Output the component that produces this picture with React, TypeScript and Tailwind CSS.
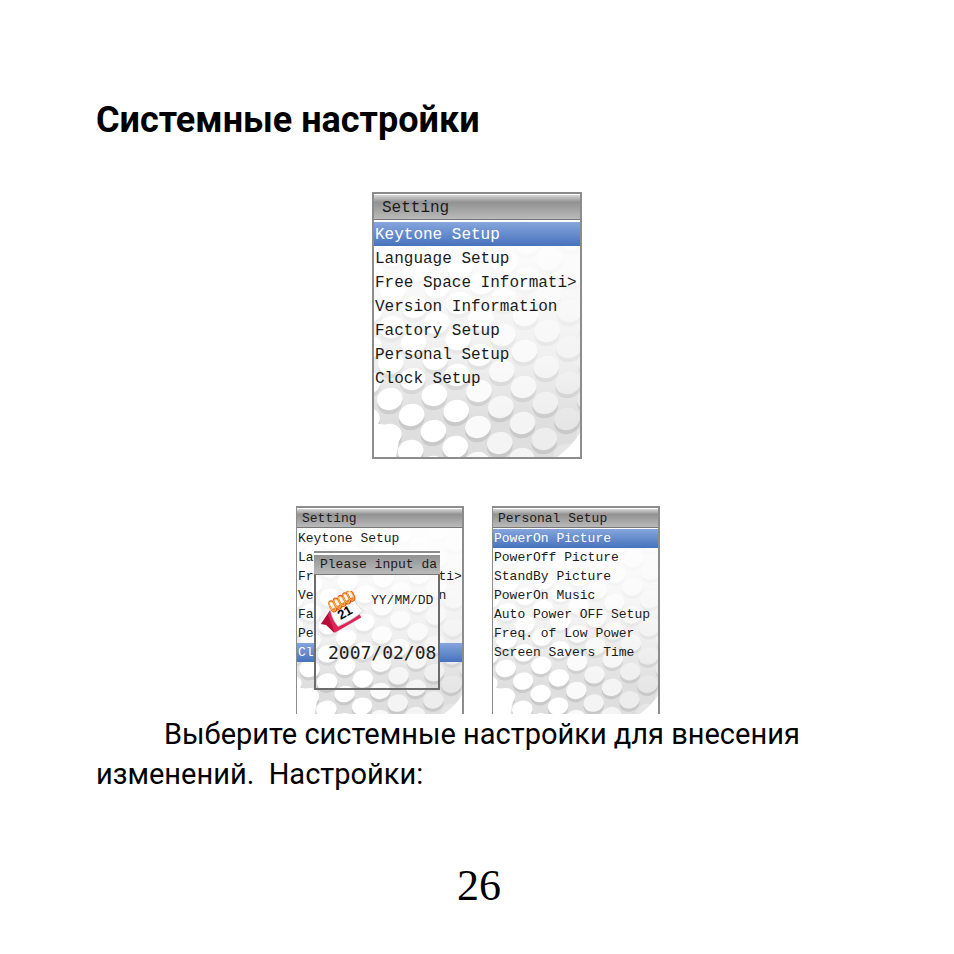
import { useId } from 'react';

const DOTS = Array.from({ length: 26 }, (_, i) => i - 10).flatMap((i) =>
  Array.from({ length: 22 }, (_, j) => j - 8).map((j) => ({
    x: 16 + 22 * i + 23 * j,
    y: 179 + 16 * i - 20 * j,
  })),
).filter(({ x, y }) => x > -14 && x < 222 && y > -14 && y < 250)
  .sort((a, b) => a.y - b.y);

const dotColor = (x: number) => {
  if (x < 95) return '#ffffff';
  if (x < 125) return '#fafafa';
  if (x < 155) return '#f4f4f4';
  return x < 185 ? '#ededed' : '#e6e6e6';
};

const DottedBackground = ({ className = 'inset-0 size-full' }: { className?: string }) => {
  const id = useId();
  return (
    <svg className={`absolute max-w-none ${className}`} viewBox="0 0 208 237" preserveAspectRatio="none" aria-hidden="true">
      <defs>
        <linearGradient id={`${id}-fade`} x1="0" y1="0" x2="0" y2="1">
          <stop offset="0" stopColor="#fff" stopOpacity="0.96" />
          <stop offset="0.3" stopColor="#fff" stopOpacity="0.8" />
          <stop offset="0.6" stopColor="#fff" stopOpacity="0.5" />
          <stop offset="0.85" stopColor="#fff" stopOpacity="0" />
        </linearGradient>
      </defs>
      <rect width="208" height="237" fill="#dedede" />
      {DOTS.map(({ x, y }) => (
        <g key={`${x}-${y}`} transform={`translate(${x} ${y}) rotate(-14)`}>
          <ellipse cx="-1" cy="4" rx="13" ry="11" fill="#c9c9c9" />
          <ellipse rx="13" ry="11" fill={dotColor(x)} />
        </g>
      ))}
      <rect width="208" height="237" fill={`url(#${id}-fade)`} />
      <path d="M0 202 L5 204 Q22 204 25 222 L22 237 H0 Z" fill="#fff" />
      <path d="M185 237 Q200 226 208 213 V237 Z" fill="#fff" />
    </svg>
  );
};

const CalendarIcon = () => (
  <svg className="w-[45px] h-[43px] shrink-0" viewBox="0 0 135 130" aria-hidden="true">
    <path d="M30 58 L2 100 L18 103 L42 126 L52 108 Z" fill="#b80d38" />
    <path d="M30 58 L24 72 L44 126 L124 80 L120 70 L52 104 Z" fill="#e02457" />
    <path d="M31 58 L101 17 Q107 43 131 60 Q96 90 54 107 Q36 86 31 58 Z" fill="#fdfdfd" stroke="#c9c9c9" strokeWidth="2" />
    <path d="M31 58 L101 17 L104 28 L40 66 Z" fill="#f3842c" />
    {[38, 52, 66, 80, 93].map((x, i) => (
      <g key={x} fill="none" transform={`translate(${x} ${46 - i * 8}) rotate(-28)`}>
        <ellipse rx="8" ry="17" stroke="#e0561b" strokeWidth="5" />
        <ellipse cx="-1" rx="7" ry="15" stroke="#ffc04b" strokeWidth="3" />
      </g>
    ))}
    <text x="62" y="88" transform="rotate(-30 62 88)" fontSize="40" fontWeight="bold" fontFamily="Liberation Sans, sans-serif">21</text>
  </svg>
);

type ScreenProps = {
  title: string;
  items: string[];
  active: number;
  large?: boolean;
  children?: React.ReactNode;
};

const Screen = ({ title, items, active, large, children }: ScreenProps) => (
  <section
    className={`relative flex flex-col border-[#8c8c8c] font-['Liberation_Mono',monospace] text-[#1c1c1c] ${
      large ? 'w-[210px] h-[267px] border-2 text-base' : 'w-[168px] h-[208px] border-x border-r-2 border-t-2 text-[13px]'
    }`}
  >
    <h2
      className={`bg-linear-to-b from-[#d8d8d8] via-[#929292] via-30% to-[#bababa] border-y border-t-white border-b-[#777] ${
        large ? 'h-[26px] pl-2 leading-[26px]' : 'h-5 pl-[5px] leading-5'
      }`}
    >
      {title}
    </h2>
    <div className="relative flex-1">
      <DottedBackground />
      <ul className={`relative ${large ? 'pt-[2px]' : 'pt-px'}`}>
        {items.map((item, i) => (
          <li key={item}>
            <button
              type="button"
              className={`block w-full pl-px text-left whitespace-pre overflow-hidden ${large ? 'h-6 leading-[26px]' : 'h-[19px] leading-5'} ${
                i === active ? 'bg-linear-to-b from-[#86a5dc] to-[#4673bd] text-white' : ''
              }`}
            >
              {item}
            </button>
          </li>
        ))}
      </ul>
    </div>
    {children}
  </section>
);

const settings = [
  'Keytone Setup',
  'Language Setup',
  'Free Space Informati>',
  'Version Information',
  'Factory Setup',
  'Personal Setup',
  'Clock Setup',
];

const personal = [
  'PowerOn Picture',
  'PowerOff Picture',
  'StandBy Picture',
  'PowerOn Music',
  'Auto Power OFF Setup',
  'Freq. of Low Power',
  'Screen Savers Time',
];

const DateDialog = () => (
  <div className="absolute left-[17px] top-[43px] w-[126px] h-[139px] flex flex-col border-t-2 border-[#8c8c8c] bg-white pt-[2px]">
    <h3 className="h-5 border-b border-[#777] bg-linear-to-b from-[#929292] to-[#bababa] pl-[6px] leading-5 whitespace-pre overflow-hidden">
      Please input da
    </h3>
    <div className="relative flex-1 overflow-hidden border-2 border-t-0 border-[#6c6c6c]">
      <DottedBackground className="-left-[19px] -top-[46px] w-[165px] h-[186px]" />
      <div className="relative flex items-start pt-4 pl-1">
        <CalendarIcon />
        <label htmlFor="date" className="pl-[6px]">YY/MM/DD</label>
      </div>
      <input
        id="date"
        defaultValue="2007/02/08"
        className="relative block w-full mt-[5px] pl-3 h-7 font-['DejaVu_Sans_Mono',monospace] text-lg"
      />
    </div>
  </div>
);

function App() {
  return (
    <main className="min-h-screen bg-white text-black px-24 pt-24 pb-10 font-['Roboto',sans-serif]">
      <h1 className="text-4xl leading-[48px] font-bold">Системные настройки</h1>
      <div className="mt-12 flex justify-center">
        <Screen title="Setting" items={settings} active={0} large />
      </div>
      <div className="mt-[47px] pl-[2px] flex justify-center gap-7">
        <Screen title="Setting" items={settings} active={6}>
          <DateDialog />
        </Screen>
        <Screen title="Personal Setup" items={personal} active={0} />
      </div>
      <p className="indent-[68px] text-[29px] leading-10">
        Выберите системные настройки для внесения изменений.&nbsp; Настройки:
      </p>
      <p className="mt-[68px] pl-1 text-center text-[44px] leading-[48px] font-['Liberation_Serif',serif]">26</p>
    </main>
  );
}

export default App;
